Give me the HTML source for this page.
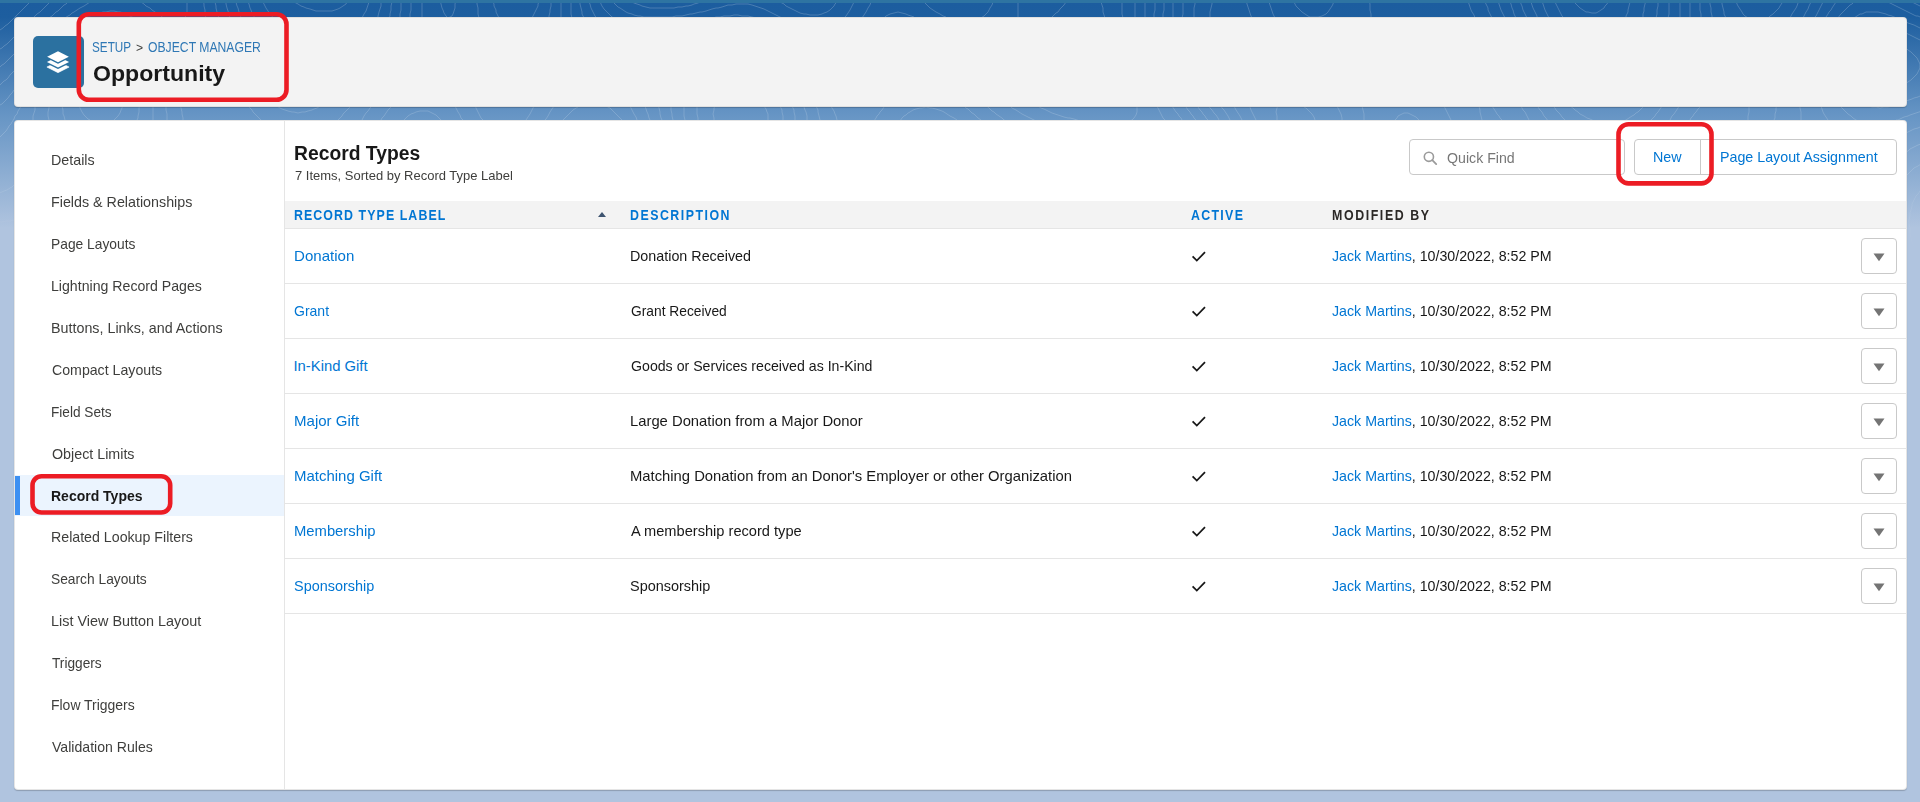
<!DOCTYPE html>
<html><head><meta charset="utf-8"><title>Opportunity | Record Types</title>
<style>
*{margin:0;padding:0;box-sizing:border-box}
html,body{width:1920px;height:802px;overflow:hidden}
body{position:relative;font-family:"Liberation Sans",sans-serif;background:#b0c4df;}
.bg{position:absolute;left:0;top:0;width:1920px;height:300px;
 background:linear-gradient(to bottom,#2e74a2 0,#2e74a2 3px,#1c5d9f 3px,#1d5e9f 17px,#6594c4 113px,#b0c4df 228px,#b0c4df 300px);}
.abs{position:absolute}
.t{position:absolute;white-space:nowrap;font-family:"Liberation Sans",sans-serif}
.card{position:absolute;border-radius:4px;}
.hdr{left:14px;top:17px;width:1893px;height:90px;background:#f3f3f3;border:1px solid rgba(0,0,0,.08);box-shadow:0 1px 1px rgba(0,0,0,.2)}
.main{left:14px;top:120px;width:1893px;height:670px;background:#fff;border:1px solid rgba(0,0,0,.1);box-shadow:0 1px 1px rgba(0,0,0,.2)}
.icon{position:absolute;left:33px;top:36px;width:51px;height:52px;background:#2b71a0;border-radius:5px}
.icon svg{position:absolute;left:0;top:0}
.navsel{position:absolute;left:15px;top:475px;width:269px;height:41px;background:#ebf4fe}
.navbar{position:absolute;left:15px;top:476px;width:4.5px;height:39px;background:#3d90f2}
.vline{position:absolute;left:284px;top:120px;width:1px;height:670px;background:#e5e5e5}
.qfbox{position:absolute;left:1409px;top:139px;width:216px;height:36px;border:1px solid #c9c9c9;border-radius:4px;background:#fff}
.btng{position:absolute;left:1634px;top:139px;width:263px;height:36px;border:1px solid #c9c9c9;border-radius:4px;background:#fff}
.btndiv{position:absolute;left:1700px;top:139px;width:1px;height:36px;background:#c9c9c9}
.thead{position:absolute;left:285px;top:201px;width:1621px;height:28px;background:#f3f3f3;border-bottom:1px solid #e5e5e5}
.rowb{position:absolute;left:285px;width:1621px;height:1px;background:#e5e5e5}
.dd{position:absolute;left:1861px;width:36px;height:35.5px;border:1px solid #c9c9c9;border-radius:4px;background:#fff}
</style></head>
<body>
<div class="bg"></div>
<svg class="abs" style="left:0;top:0" width="1920" height="270"><defs><linearGradient id="tg" x1="0" y1="0" x2="0" y2="1"><stop offset="0" stop-color="#fff" stop-opacity="1"/><stop offset="0.55" stop-color="#fff" stop-opacity="0.8"/><stop offset="0.95" stop-color="#fff" stop-opacity="0"/></linearGradient><mask id="tm" maskUnits="userSpaceOnUse" x="0" y="0" width="1920" height="270"><rect x="0" y="3" width="1920" height="267" fill="url(#tg)"/></mask></defs><g mask="url(#tm)" fill="none" stroke="#ffffff" stroke-opacity="0.2" stroke-width="1"><path d="M627 -2 629 0 632 2 634 3 637 4 640 5 642 6 646 7 650 8 653 8 656 8 660 8 664 8 668 8 672 8 674 8 678 7 682 7 686 6 688 6 692 5 694 4 698 3 700 2 704 1 706 -0 710 -2 710 -2"/><path d="M775 -2 778 0 780 2 782 3 784 4 786 6 790 8 792 9 794 10 798 12 800 13 804 14 806 14 810 15 814 15 818 15 822 14 824 13 827 12 830 10 832 8 834 6 835 4 837 2 838 -1 839 -2"/><path d="M611 -2 612 0 614 3 616 5 618 7 620 8 623 10 626 12 628 13 632 14 634 15 638 16 640 16 644 17 648 17 652 17 656 17 660 17 664 17 668 17 672 17 676 16 679 16 682 16 686 15 690 14 692 14 696 13 700 12 702 12 706 11 709 10 712 9 716 8 718 8 722 7 725 6 728 5 732 5 736 4 738 4 742 4 744 4 748 4 752 5 755 6 758 7 761 8 764 9 766 10 770 12 772 13 774 14 778 16 780 17 782 18 782 18"/><path d="M844 18 846 16 848 13 850 10 851 8 852 6 854 2 855 0 855 -2"/><path d="M951 -2 954 -1 958 -0 962 -0 966 -2 967 -2"/><path d="M-2 4 0 3 2 1 4 -1 5 -2"/><path d="M599 -2 600 1 601 4 602 6 604 9 606 11 608 13 610 15 612 17 614 18"/><path d="M713 18 716 17 720 17 724 16 726 16 730 16 734 15 738 15 742 16 746 16 748 16 752 17 756 18 756 18"/><path d="M862 18 864 15 866 12 867 10 868 8 870 5 871 2 872 0 873 -2"/><path d="M920 -2 922 0 924 2 926 4 928 6 930 8 933 10 936 12 938 13 940 14 943 16 946 17 947 18"/><path d="M981 18 984 16 986 14 988 12 989 10 990 8 992 5 993 2 994 -1 994 -2"/><path d="M-2 31 0 30 3 28 5 26 8 24 10 22 12 20 14 18 16 16 18 14 20 12 22 10 24 8 26 6 28 4 30 2 31 0 33 -2 33 -2"/><path d="M589 -2 589 2 590 4 591 8 592 10 594 14 595 16 597 18 597 18"/><path d="M884 18 886 16 888 15 890 14 894 13 898 12 902 13 906 14 908 15 911 16 914 17 915 18"/><path d="M1018 18 1018 14 1018 10 1018 6 1018 2 1018 -2 1018 -2"/><path d="M1069 -2 1068 0 1066 2 1064 5 1062 7 1060 9 1058 12 1056 13 1054 15 1052 17 1051 18"/><path d="M1073 104 1076 105 1080 105 1084 106 1086 106 1090 106 1094 106 1097 106 1100 105 1104 104 1105 104"/><path d="M1105 18 1104 15 1103 12 1103 8 1102 5 1101 2 1101 -2 1101 -2"/><path d="M1572 -2 1573 0 1574 2 1576 4 1578 6 1580 8 1583 10 1586 12 1588 12 1592 13 1596 13 1598 12 1601 10 1604 8 1605 6 1607 4 1608 2 1610 -2 1610 -2"/><path d="M-2 51 0 49 2 48 4 46 7 44 9 42 11 40 13 38 14 37"/><path d="M33 18 35 16 37 14 40 12 42 10 44 8 46 6 48 4 50 2 51 0 53 -2 53 -2"/><path d="M579 -2 580 2 580 4 581 8 582 12 582 14 584 18 584 18"/><path d="M1034 104 1036 105 1038 106 1041 108 1044 109 1046 110 1050 112 1052 113 1055 114 1058 115 1061 116 1064 117 1068 118 1070 118 1074 119 1077 120 1080 121 1082 121"/><path d="M1130 121 1132 120 1134 118 1136 115 1137 112 1137 108 1137 104 1137 104"/><path d="M1123 18 1122 14 1122 10 1122 6 1122 2 1122 -2 1122 -2"/><path d="M1554 -2 1554 0 1556 4 1557 6 1558 8 1560 12 1561 14 1562 16 1564 18"/><path d="M1626 18 1626 16 1628 12 1628 10 1629 6 1630 2 1630 0 1631 -2"/><path d="M-2 68 0 67 2 65 4 64 6 62 8 60 10 58 12 56 14 54 14 54"/><path d="M49 18 52 16 54 14 56 12 58 11 60 9 62 7 64 5 66 4 68 2 70 0 72 -2 72 -2"/><path d="M570 -2 571 2 571 6 571 10 571 14 572 18 572 18"/><path d="M1007 104 1010 106 1012 108 1014 109 1016 110 1019 112 1022 114 1024 115 1026 116 1030 118 1032 119 1034 120 1036 121"/><path d="M1165 120 1163 118 1162 116 1160 112 1159 110 1158 108 1156 105 1155 104"/><path d="M1135 18 1135 14 1135 10 1135 6 1135 2 1135 -2 1135 -2"/><path d="M1541 -2 1542 1 1543 4 1544 7 1545 10 1546 12 1548 16 1549 18 1549 18"/><path d="M1643 18 1643 14 1644 11 1644 8 1645 4 1646 0 1646 -2"/><path d="M1906 83 1908 82 1911 80 1913 78 1915 76 1917 74 1918 72 1920 68 1920 66 1920 64 1918 60 1917 58 1915 56 1913 54 1911 52 1908 50 1906 48 1906 48"/><path d="M622 120 620 118 618 116 616 114 614 112 612 110 610 108 608 107 606 106 603 104 603 104"/><path d="M582 104 580 105 578 107 576 108 573 110 571 112 569 114 567 116 565 118 563 120 562 121"/><path d="M442 121 440 119 438 117 436 115 434 114 430 112 428 111 424 111 420 111 416 112 414 113 411 114 408 116 406 118 404 120 404 120"/><path d="M-2 86 0 85 2 83 4 81 6 80 8 78 10 75 12 73 14 71 15 70"/><path d="M65 18 68 16 70 15 72 13 74 12 77 10 80 8 82 7 84 6 87 4 90 2 92 1 94 0 98 -2 98 -2"/><path d="M134 -2 136 -1 138 0 141 2 144 4 146 6 148 7 150 8 152 10 155 12 158 14 160 15 162 17 164 18"/><path d="M185 18 186 15 187 12 187 8 187 4 187 0 187 -2"/><path d="M440 -2 440 0 441 4 442 8 443 10 444 13 446 16 448 18 448 18"/><path d="M448 18 452 16 453 14 454 11 455 8 455 4 456 0 456 -2 456 -2"/><path d="M562 -2 561 2 561 6 561 10 561 14 561 18 561 18"/><path d="M555 104 554 106 552 109 550 112 549 114 548 116 546 119 545 120"/><path d="M463 120 461 118 460 115 458 112 457 110 456 108 454 104 454 104"/><path d="M394 104 392 106 390 108 388 110 386 113 384 116 382 118 381 120 381 120"/><path d="M637 120 636 117 634 114 633 112 632 110 630 106 629 104 629 104"/><path d="M984 104 986 106 988 107 990 109 992 111 994 112 996 114 999 116 1002 118 1004 120 1006 121 1006 121"/><path d="M1182 120 1181 118 1179 116 1178 114 1176 112 1174 109 1172 106 1170 104 1170 104"/><path d="M1145 18 1145 14 1145 10 1145 6 1145 2 1146 -2 1146 -2"/><path d="M1530 -2 1531 2 1532 5 1533 8 1534 10 1536 14 1537 16 1537 18"/><path d="M1656 18 1657 14 1657 10 1658 6 1658 3 1658 0 1658 -2"/><path d="M1922 40 1920 40 1916 38 1914 37 1912 36 1908 34 1906 33 1906 33"/><path d="M1863 104 1866 105 1869 106 1872 107 1876 107 1880 108 1884 107 1888 107 1892 106 1894 105 1898 104 1899 104"/><path d="M1906 101 1909 100 1912 99 1914 98 1918 97 1920 96 1922 95"/><path d="M-2 107 0 105 2 104 4 102 6 100 8 98 10 95 12 93 14 90 14 90"/><path d="M84 18 88 16 90 16 94 14 96 14 100 13 103 12 106 12 110 11 114 11 118 12 120 12 124 13 126 14 130 16 132 17 134 18 134 18"/><path d="M206 18 205 14 205 10 204 6 204 4 203 0 203 -2"/><path d="M422 -2 422 2 422 6 422 9 422 12 422 16 422 18"/><path d="M373 104 372 106 370 108 368 111 366 113 364 116 363 118 362 120 362 120"/><path d="M552 -2 551 2 551 6 550 10 550 12 549 16 549 18"/><path d="M535 104 534 106 532 110 531 112 530 114 528 117 526 120 526 120"/><path d="M483 120 481 118 480 116 478 112 477 110 476 108 475 104 475 104"/><path d="M479 18 478 14 478 11 478 8 477 4 477 0 477 -2"/><path d="M1196 120 1194 118 1193 116 1191 114 1190 112 1188 110 1186 107 1184 105 1183 104"/><path d="M1154 18 1154 14 1155 10 1155 6 1155 2 1155 -2 1155 -2"/><path d="M1519 -2 1520 0 1521 4 1522 6 1523 10 1524 12 1526 16 1527 18 1527 18"/><path d="M1596 104 1600 105 1604 105 1608 106 1612 105 1616 105 1618 104"/><path d="M1668 18 1669 14 1669 10 1669 6 1669 2 1670 -2 1670 -2"/><path d="M1922 28 1920 28 1916 26 1914 25 1911 24 1908 23 1906 22 1906 22"/><path d="M1897 18 1894 17 1892 16 1888 15 1886 14 1882 13 1878 12 1876 12 1872 12 1869 12 1866 12 1862 14 1860 14 1857 16 1854 18 1853 18"/><path d="M1839 104 1840 106 1842 108 1844 110 1846 112 1848 114 1851 116 1853 118 1856 120 1858 121 1858 121"/><path d="M1896 120 1898 120 1902 118 1904 117 1908 116 1910 115 1913 114 1916 113 1919 112 1922 111 1922 111"/><path d="M650 120 649 118 648 114 647 112 646 109 645 106 645 104"/><path d="M830 104 831 106 832 108 834 111 835 114 836 116 837 120 837 120"/><path d="M874 121 876 118 877 116 879 114 880 112 882 110 884 107 886 105 887 104"/><path d="M961 104 964 106 966 108 968 109 970 111 972 113 974 114 976 116 978 118 981 120 982 121"/><path d="M411 -2 411 2 411 6 411 10 410 14 410 18 410 18"/><path d="M353 104 351 106 349 108 347 110 345 112 343 114 342 116 340 118 338 120 338 120"/><path d="M261 120 259 118 257 116 255 114 253 112 252 110 250 108 248 105 247 104"/><path d="M219 18 218 15 217 12 216 8 216 6 215 2 215 -2 215 -2"/><path d="M540 -2 540 0 538 4 538 6 536 10 535 12 534 14 532 18 532 18"/><path d="M499 18 498 16 496 12 496 10 494 6 494 4 492 0 492 -2 492 -2"/><path d="M1208 120 1206 118 1205 116 1203 114 1202 112 1200 110 1198 107 1196 105 1195 104"/><path d="M1163 18 1163 14 1164 10 1164 6 1164 4 1164 0 1164 -2"/><path d="M1509 -2 1510 2 1511 4 1512 8 1513 10 1514 14 1515 16 1516 18"/><path d="M1568 104 1570 106 1573 108 1575 110 1578 112 1580 114 1582 115 1584 116 1587 118 1590 119 1592 120 1594 121"/><path d="M1624 121 1626 120 1629 118 1632 116 1634 115 1636 113 1638 112 1640 110 1642 108 1644 106 1646 104 1646 104"/><path d="M1680 18 1680 14 1680 10 1680 6 1680 3 1680 0 1680 -2"/><path d="M1922 18 1918 16 1916 16 1912 14 1910 13 1908 12 1904 10 1902 9 1900 8 1896 6 1894 5 1892 4 1888 2 1886 1 1883 0 1880 -1 1878 -2 1878 -2"/><path d="M1862 -2 1860 -1 1858 0 1854 2 1852 4 1850 5 1848 7 1846 9 1844 11 1842 13 1840 15 1838 18 1838 18"/><path d="M1820 104 1821 106 1822 109 1823 112 1824 114 1826 117 1828 120 1828 121"/><path d="M1906 133 1908 132 1912 130 1914 129 1918 128 1920 127 1922 127"/><path d="M-2 139 0 137 2 135 4 133 6 131 8 128 9 126 11 124 12 122 14 119 15 116 17 114 18 111 20 108 21 106 22 104"/><path d="M180 104 181 108 182 112 182 114 183 118 183 120"/><path d="M662 120 661 118 660 114 660 112 659 108 658 104 658 104"/><path d="M815 104 816 106 818 110 818 112 819 116 820 120 820 120"/><path d="M900 121 902 118 904 116 906 115 908 113 910 112 913 110 916 109 920 108 922 108 926 107 930 108 932 108 936 109 939 110 942 111 944 112 947 114 950 116 952 117 954 118 957 120 958 121"/><path d="M401 -2 401 2 401 6 401 10 400 14 400 16 400 18"/><path d="M324 104 322 105 320 106 317 108 314 109 312 110 308 111 305 112 302 112 298 113 294 112 292 112 288 111 285 110 282 109 280 108 277 106 274 104 274 104"/><path d="M230 18 229 14 228 11 227 8 226 4 226 2 225 -2 225 -2"/><path d="M1219 120 1218 118 1216 115 1214 113 1212 110 1210 108 1209 106 1207 104 1207 104"/><path d="M1173 18 1173 14 1173 10 1173 6 1173 2 1174 -2 1174 -2"/><path d="M1497 -2 1498 0 1499 4 1500 7 1501 10 1502 12 1504 16 1505 18 1505 18"/><path d="M1551 104 1553 106 1555 108 1556 110 1558 112 1560 114 1562 117 1564 119 1566 121 1566 121"/><path d="M1651 120 1653 118 1655 116 1656 114 1658 112 1660 109 1662 106 1664 104 1664 104"/><path d="M1690 18 1690 14 1690 10 1690 6 1690 2 1690 -2 1690 -2"/><path d="M1839 -2 1837 0 1836 2 1834 5 1832 8 1831 10 1829 12 1828 14 1826 17 1826 18"/><path d="M1800 104 1800 108 1801 112 1801 116 1801 120 1801 120"/><path d="M1922 7 1920 6 1916 4 1914 3 1912 2 1909 0 1906 -2 1906 -2"/><path d="M-2 193 2 192 4 191 7 190 10 188 12 187 14 185 14 185"/><path d="M33 120 33 116 34 113 35 110 35 106 36 104"/><path d="M166 104 166 108 166 110 167 114 167 118 167 120"/><path d="M673 120 672 116 672 114 671 110 671 106 671 104"/><path d="M803 104 804 107 805 110 806 112 807 116 807 120 807 120"/><path d="M1906 152 1908 151 1910 149 1912 148 1916 146 1918 145 1921 144 1922 144"/><path d="M392 -2 392 2 391 6 391 10 390 14 390 16 389 18"/><path d="M241 18 240 14 239 12 238 8 237 6 236 2 236 0 235 -2"/><path d="M1420 121 1418 119 1416 117 1414 116 1410 114 1408 113 1404 113 1402 114 1398 116 1397 118 1395 120 1395 120"/><path d="M1230 120 1229 118 1228 116 1226 113 1224 110 1222 108 1221 106 1219 104 1219 104"/><path d="M1182 18 1183 14 1183 10 1183 6 1183 2 1184 -2 1184 -2"/><path d="M1292 -2 1294 2 1295 4 1296 6 1298 8 1300 10 1302 12 1305 14 1308 16 1310 17 1314 17 1318 17 1322 16 1324 15 1326 14 1328 12 1330 9 1332 6 1333 4 1334 0 1335 -2 1335 -2"/><path d="M1484 -2 1485 2 1486 4 1488 8 1488 10 1490 14 1491 16 1492 18"/><path d="M1536 104 1538 107 1540 110 1542 112 1543 114 1544 116 1546 118 1548 121 1548 121"/><path d="M1670 120 1671 118 1672 116 1674 114 1676 111 1678 108 1679 106 1681 104 1681 104"/><path d="M1701 18 1701 14 1700 10 1700 6 1700 2 1700 0 1700 -2"/><path d="M1825 -2 1824 0 1822 4 1821 6 1820 8 1818 12 1817 14 1816 16 1814 18"/><path d="M1777 104 1776 108 1776 111 1775 114 1775 118 1774 120"/><path d="M-2 222 2 222 6 221 10 221 14 220 14 220"/><path d="M49 120 48 116 48 112 49 108 49 104 49 104"/><path d="M153 104 153 108 153 112 153 116 153 120 153 120"/><path d="M685 120 684 116 684 114 684 110 684 106 684 104"/><path d="M791 104 792 106 794 110 794 112 795 116 795 120 795 120"/><path d="M1906 176 1908 174 1910 172 1912 170 1914 168 1916 167 1918 166 1921 164 1922 163"/><path d="M382 -2 381 2 381 6 380 9 379 12 378 16 378 18 378 18"/><path d="M254 18 254 16 252 13 251 10 250 8 249 4 248 2 247 -2 247 -2"/><path d="M1268 -2 1269 2 1270 5 1271 8 1272 11 1273 14 1274 16 1275 18"/><path d="M1362 104 1362 106 1363 110 1364 114 1364 118 1364 120 1364 120"/><path d="M1242 120 1241 118 1240 116 1238 113 1236 110 1235 108 1234 106 1232 104"/><path d="M1194 18 1194 14 1194 12 1194 8 1195 4 1195 0 1195 -2"/><path d="M1451 120 1450 118 1448 114 1447 112 1446 110 1444 106 1443 104 1443 104"/><path d="M1371 18 1371 14 1370 10 1370 8 1370 4 1369 0 1369 -2"/><path d="M1467 -2 1468 1 1469 4 1470 7 1471 10 1472 12 1474 15 1475 18 1475 18"/><path d="M1520 104 1522 108 1523 110 1525 112 1526 114 1528 118 1529 120 1530 121"/><path d="M1813 -2 1812 0 1810 4 1809 6 1808 9 1806 12 1805 14 1804 16 1803 18"/><path d="M1749 104 1749 108 1749 112 1748 116 1748 120 1748 120"/><path d="M1690 120 1691 118 1693 116 1694 114 1696 112 1698 109 1700 107 1702 104 1702 104"/><path d="M1712 18 1712 16 1711 12 1711 8 1710 4 1710 0 1710 -2 1710 -2"/><path d="M65 120 64 116 63 114 63 110 62 106 62 104"/><path d="M140 104 139 108 139 112 138 116 138 118 137 120"/><path d="M698 120 698 118 697 114 697 110 697 106 698 104"/><path d="M779 104 780 106 782 110 782 112 783 116 783 120 783 120"/><path d="M-2 245 2 245 6 245 10 246 12 246 14 246"/><path d="M1920 270 1919 266 1918 264 1917 260 1916 257 1915 254 1914 250 1914 248 1913 244 1912 242 1911 238 1910 234 1910 232 1910 228 1909 224 1909 220 1910 216 1910 213 1911 210 1912 206 1912 204 1914 200 1915 198 1916 196 1918 194 1920 191 1922 189 1922 189"/><path d="M370 -2 369 2 368 5 367 8 366 11 364 14 363 16 362 18"/><path d="M273 18 272 16 270 14 268 11 266 8 265 6 264 4 262 0 262 -2 262 -2"/><path d="M1245 -2 1246 0 1247 4 1248 7 1249 10 1250 13 1251 16 1252 18 1252 18"/><path d="M1336 104 1337 106 1338 108 1340 112 1341 114 1342 118 1342 120 1342 120"/><path d="M1256 120 1255 118 1254 116 1252 112 1251 110 1250 107 1248 104 1248 104"/><path d="M1210 18 1210 15 1210 12 1211 8 1212 4 1212 2 1213 -2 1213 -2"/><path d="M1800 -2 1799 0 1798 3 1797 6 1796 8 1794 11 1792 14 1791 16 1790 18 1790 18"/><path d="M1726 18 1724 14 1724 12 1723 8 1722 4 1722 2 1721 -2 1721 -2"/><path d="M1482 120 1481 116 1480 112 1480 110 1479 106 1478 104"/><path d="M1491 104 1492 106 1494 109 1496 112 1497 114 1499 116 1500 118 1502 120 1502 120"/><path d="M90 120 88 119 86 117 84 115 82 112 81 110 80 108 79 104 79 104"/><path d="M123 104 122 108 121 110 120 113 118 116 116 118 114 120 114 120"/><path d="M714 120 714 118 713 114 714 110 714 108 716 104 716 104"/><path d="M762 104 764 106 766 109 767 112 768 114 768 118 768 120 768 120"/><path d="M350 -2 349 0 347 2 346 4 343 6 340 8 338 9 335 10 332 11 328 11 324 11 320 11 316 11 313 10 310 9 306 8 304 7 301 6 298 4 296 3 294 2 292 0 289 -2 289 -2"/><path d="M1785 -2 1784 0 1782 3 1780 6 1779 8 1777 10 1775 12 1773 14 1770 16 1768 18 1767 18"/><path d="M1748 18 1745 16 1743 14 1742 12 1740 9 1738 6 1737 4 1736 1 1735 -2 1735 -2"/><path d="M1277 120 1277 116 1276 112 1277 108 1278 104 1278 104"/><path d="M1299 104 1302 105 1304 107 1306 108 1308 110 1310 112 1312 114 1314 117 1315 120 1315 120"/></g></svg>
<div class="card hdr"></div>
<div class="icon"><svg width="51" height="52" viewBox="0 0 51 52">
<path d="M25 25.45 L36.1 31.05 L25 36.65 L13.9 31.05 Z" fill="#fff" stroke="#fff" stroke-width="0.6" stroke-linejoin="round"/>
<path d="M25 20.40 L36.1 26.00 L25 31.60 L13.9 26.00 Z" fill="#fff" stroke="#2b71a0" stroke-width="2.6" stroke-linejoin="round"/>
<path d="M25 20.40 L36.1 26.00 L25 31.60 L13.9 26.00 Z" fill="#fff"/>
<path d="M25 15.15 L35.85 20.75 L25 26.35 L14.15 20.75 Z" fill="#fff" stroke="#2b71a0" stroke-width="2.6" stroke-linejoin="round"/>
<path d="M25 15.15 L35.85 20.75 L25 26.35 L14.15 20.75 Z" fill="#fff"/>
</svg></div>
<div class="card main"></div>
<div class="navsel"></div><div class="navbar"></div>
<div class="vline"></div>
<div class="qfbox"></div>
<svg class="abs" style="left:1420px;top:148px" width="22" height="22" viewBox="0 0 22 22">
<circle cx="8.9" cy="8.8" r="4.6" fill="none" stroke="#9b9b9b" stroke-width="1.6"/>
<path d="M12.3 12.2 L16.2 16.1" stroke="#9b9b9b" stroke-width="1.8" stroke-linecap="round"/></svg>
<div class="btng"></div><div class="btndiv"></div>
<div class="thead"></div>
<svg class="abs" style="left:597px;top:211px" width="10" height="7" viewBox="0 0 10 7"><path d="M1 6 L5 1 L9 6 Z" fill="#3e5470"/></svg>
<div class="rowb" style="top:283px"></div>
<svg class="abs" style="left:1190px;top:250px" width="17" height="13" viewBox="0 0 17 13"><path d="M2.6 6.3 L6.8 10.6 L15 2.2" fill="none" stroke="#181818" stroke-width="1.75"/></svg>
<div class="dd" style="top:238.3px"><svg width="12" height="9" viewBox="0 0 12 9" style="position:absolute;left:10.5px;top:13.8px"><path d="M0.5 0.5 L11.5 0.5 L6 8.3 Z" fill="#747474"/></svg></div>
<div class="rowb" style="top:338px"></div>
<svg class="abs" style="left:1190px;top:305px" width="17" height="13" viewBox="0 0 17 13"><path d="M2.6 6.3 L6.8 10.6 L15 2.2" fill="none" stroke="#181818" stroke-width="1.75"/></svg>
<div class="dd" style="top:293.3px"><svg width="12" height="9" viewBox="0 0 12 9" style="position:absolute;left:10.5px;top:13.8px"><path d="M0.5 0.5 L11.5 0.5 L6 8.3 Z" fill="#747474"/></svg></div>
<div class="rowb" style="top:393px"></div>
<svg class="abs" style="left:1190px;top:360px" width="17" height="13" viewBox="0 0 17 13"><path d="M2.6 6.3 L6.8 10.6 L15 2.2" fill="none" stroke="#181818" stroke-width="1.75"/></svg>
<div class="dd" style="top:348.3px"><svg width="12" height="9" viewBox="0 0 12 9" style="position:absolute;left:10.5px;top:13.8px"><path d="M0.5 0.5 L11.5 0.5 L6 8.3 Z" fill="#747474"/></svg></div>
<div class="rowb" style="top:448px"></div>
<svg class="abs" style="left:1190px;top:415px" width="17" height="13" viewBox="0 0 17 13"><path d="M2.6 6.3 L6.8 10.6 L15 2.2" fill="none" stroke="#181818" stroke-width="1.75"/></svg>
<div class="dd" style="top:403.3px"><svg width="12" height="9" viewBox="0 0 12 9" style="position:absolute;left:10.5px;top:13.8px"><path d="M0.5 0.5 L11.5 0.5 L6 8.3 Z" fill="#747474"/></svg></div>
<div class="rowb" style="top:503px"></div>
<svg class="abs" style="left:1190px;top:470px" width="17" height="13" viewBox="0 0 17 13"><path d="M2.6 6.3 L6.8 10.6 L15 2.2" fill="none" stroke="#181818" stroke-width="1.75"/></svg>
<div class="dd" style="top:458.3px"><svg width="12" height="9" viewBox="0 0 12 9" style="position:absolute;left:10.5px;top:13.8px"><path d="M0.5 0.5 L11.5 0.5 L6 8.3 Z" fill="#747474"/></svg></div>
<div class="rowb" style="top:558px"></div>
<svg class="abs" style="left:1190px;top:525px" width="17" height="13" viewBox="0 0 17 13"><path d="M2.6 6.3 L6.8 10.6 L15 2.2" fill="none" stroke="#181818" stroke-width="1.75"/></svg>
<div class="dd" style="top:513.3px"><svg width="12" height="9" viewBox="0 0 12 9" style="position:absolute;left:10.5px;top:13.8px"><path d="M0.5 0.5 L11.5 0.5 L6 8.3 Z" fill="#747474"/></svg></div>
<div class="rowb" style="top:613px"></div>
<svg class="abs" style="left:1190px;top:580px" width="17" height="13" viewBox="0 0 17 13"><path d="M2.6 6.3 L6.8 10.6 L15 2.2" fill="none" stroke="#181818" stroke-width="1.75"/></svg>
<div class="dd" style="top:568.3px"><svg width="12" height="9" viewBox="0 0 12 9" style="position:absolute;left:10.5px;top:13.8px"><path d="M0.5 0.5 L11.5 0.5 L6 8.3 Z" fill="#747474"/></svg></div>
<div class="t" id="bc1" style="left:92.25px;top:34px;font-size:14.2px;line-height:26px;color:#2f78b5;transform:scaleX(0.8261);transform-origin:0 0;">SETUP</div>
<div class="t" id="bc2" style="left:135.9px;top:35px;font-size:13.5px;line-height:25px;color:#3e3e3c;transform:scaleX(0.9007);transform-origin:0 0;">&gt;</div>
<div class="t" id="bc3" style="left:148.1px;top:34px;font-size:14.2px;line-height:26px;color:#2f78b5;transform:scaleX(0.8589);transform-origin:0 0;">OBJECT MANAGER</div>
<div class="t" id="opp" style="left:93.0px;top:56px;font-size:22.4px;line-height:35px;color:#181818;font-weight:bold;transform:scaleX(1.0312);transform-origin:0 0;">Opportunity</div>
<div class="t" id="nav0" style="left:50.7px;top:147px;font-size:14.8px;line-height:26px;color:#3e3e3c;transform:scaleX(0.9656);transform-origin:0 0;">Details</div>
<div class="t" id="nav1" style="left:50.7px;top:189px;font-size:14.8px;line-height:26px;color:#3e3e3c;transform:scaleX(0.9656);transform-origin:0 0;">Fields &amp; Relationships</div>
<div class="t" id="nav2" style="left:50.7px;top:231px;font-size:14.8px;line-height:26px;color:#3e3e3c;transform:scaleX(0.933);transform-origin:0 0;">Page Layouts</div>
<div class="t" id="nav3" style="left:50.7px;top:273px;font-size:14.8px;line-height:26px;color:#3e3e3c;transform:scaleX(0.9555);transform-origin:0 0;">Lightning Record Pages</div>
<div class="t" id="nav4" style="left:50.7px;top:315px;font-size:14.8px;line-height:26px;color:#3e3e3c;transform:scaleX(0.9662);transform-origin:0 0;">Buttons, Links, and Actions</div>
<div class="t" id="nav5" style="left:51.7px;top:357px;font-size:14.8px;line-height:26px;color:#3e3e3c;transform:scaleX(0.9565);transform-origin:0 0;">Compact Layouts</div>
<div class="t" id="nav6" style="left:50.7px;top:399px;font-size:14.8px;line-height:26px;color:#3e3e3c;transform:scaleX(0.9222);transform-origin:0 0;">Field Sets</div>
<div class="t" id="nav7" style="left:51.7px;top:441px;font-size:14.8px;line-height:26px;color:#3e3e3c;transform:scaleX(0.9648);transform-origin:0 0;">Object Limits</div>
<div class="t" id="nav8" style="left:50.7px;top:483px;font-size:14.3px;line-height:26px;color:#181818;font-weight:bold;transform:scaleX(0.9786);transform-origin:0 0;">Record Types</div>
<div class="t" id="nav9" style="left:50.7px;top:524px;font-size:14.8px;line-height:26px;color:#3e3e3c;transform:scaleX(0.9589);transform-origin:0 0;">Related Lookup Filters</div>
<div class="t" id="nav10" style="left:50.7px;top:566px;font-size:14.8px;line-height:26px;color:#3e3e3c;transform:scaleX(0.9312);transform-origin:0 0;">Search Layouts</div>
<div class="t" id="nav11" style="left:50.7px;top:608px;font-size:14.8px;line-height:26px;color:#3e3e3c;transform:scaleX(0.9739);transform-origin:0 0;">List View Button Layout</div>
<div class="t" id="nav12" style="left:51.7px;top:650px;font-size:14.8px;line-height:26px;color:#3e3e3c;transform:scaleX(0.9244);transform-origin:0 0;">Triggers</div>
<div class="t" id="nav13" style="left:50.7px;top:692px;font-size:14.8px;line-height:26px;color:#3e3e3c;transform:scaleX(0.9429);transform-origin:0 0;">Flow Triggers</div>
<div class="t" id="nav14" style="left:51.7px;top:734px;font-size:14.8px;line-height:26px;color:#3e3e3c;transform:scaleX(0.9524);transform-origin:0 0;">Validation Rules</div>
<div class="t" id="title" style="left:294.0px;top:137px;font-size:19.6px;line-height:32px;color:#181818;font-weight:bold;transform:scaleX(0.9847);transform-origin:0 0;">Record Types</div>
<div class="t" id="sub" style="left:294.6px;top:163px;font-size:13.6px;line-height:25px;color:#3e3e3c;transform:scaleX(0.9558);transform-origin:0 0;">7 Items, Sorted by Record Type Label</div>
<div class="t" id="qf" style="left:1447.0px;top:145px;font-size:14.8px;line-height:26px;color:#767676;transform:scaleX(0.9574);transform-origin:0 0;">Quick Find</div>
<div class="t" id="new" style="left:1653.4px;top:144px;font-size:14.8px;line-height:26px;color:#0176d3;transform:scaleX(0.9661);transform-origin:0 0;">New</div>
<div class="t" id="pla" style="left:1719.5px;top:144px;font-size:14.8px;line-height:26px;color:#0176d3;transform:scaleX(0.9629);transform-origin:0 0;">Page Layout Assignment</div>
<div class="t" id="h1" style="left:293.5px;top:202px;font-size:14.4px;line-height:26px;color:#0176d3;font-weight:bold;letter-spacing:1.25px;transform:scaleX(0.86);transform-origin:0 0;">RECORD TYPE LABEL</div>
<div class="t" id="h2" style="left:630.0px;top:202px;font-size:14.4px;line-height:26px;color:#0176d3;font-weight:bold;letter-spacing:1.74px;transform:scaleX(0.86);transform-origin:0 0;">DESCRIPTION</div>
<div class="t" id="h3" style="left:1191.0px;top:202px;font-size:14.4px;line-height:26px;color:#0176d3;font-weight:bold;letter-spacing:1.52px;transform:scaleX(0.86);transform-origin:0 0;">ACTIVE</div>
<div class="t" id="h4" style="left:1331.5px;top:202px;font-size:14.4px;line-height:26px;color:#2b2826;font-weight:bold;letter-spacing:1.86px;transform:scaleX(0.86);transform-origin:0 0;">MODIFIED BY</div>
<div class="t" id="lab0" style="left:293.5px;top:243px;font-size:14.8px;line-height:26px;color:#0176d3;transform:scaleX(1.0179);transform-origin:0 0;">Donation</div>
<div class="t" id="desc0" style="left:629.8px;top:243px;font-size:14.8px;line-height:26px;color:#181818;transform:scaleX(0.9679);transform-origin:0 0;">Donation Received</div>
<div class="t" id="mod0" style="left:1332.2px;top:243px;font-size:14.8px;line-height:26px;color:#181818;transform:scaleX(0.9605);transform-origin:0 0;"><span style="color:#0176d3">Jack Martins</span>, 10/30/2022, 8:52 PM</div>
<div class="t" id="lab1" style="left:293.5px;top:298px;font-size:14.8px;line-height:26px;color:#0176d3;transform:scaleX(0.9469);transform-origin:0 0;">Grant</div>
<div class="t" id="desc1" style="left:630.8px;top:298px;font-size:14.8px;line-height:26px;color:#181818;transform:scaleX(0.9314);transform-origin:0 0;">Grant Received</div>
<div class="t" id="mod1" style="left:1332.2px;top:298px;font-size:14.8px;line-height:26px;color:#181818;transform:scaleX(0.9605);transform-origin:0 0;"><span style="color:#0176d3">Jack Martins</span>, 10/30/2022, 8:52 PM</div>
<div class="t" id="lab2" style="left:293.5px;top:353px;font-size:14.8px;line-height:26px;color:#0176d3;">In-Kind Gift</div>
<div class="t" id="desc2" style="left:630.8px;top:353px;font-size:14.8px;line-height:26px;color:#181818;transform:scaleX(0.9564);transform-origin:0 0;">Goods or Services received as In-Kind</div>
<div class="t" id="mod2" style="left:1332.2px;top:353px;font-size:14.8px;line-height:26px;color:#181818;transform:scaleX(0.9605);transform-origin:0 0;"><span style="color:#0176d3">Jack Martins</span>, 10/30/2022, 8:52 PM</div>
<div class="t" id="lab3" style="left:293.5px;top:408px;font-size:14.8px;line-height:26px;color:#0176d3;transform:scaleX(1.0159);transform-origin:0 0;">Major Gift</div>
<div class="t" id="desc3" style="left:629.8px;top:408px;font-size:14.8px;line-height:26px;color:#181818;transform:scaleX(0.9999);transform-origin:0 0;">Large Donation from a Major Donor</div>
<div class="t" id="mod3" style="left:1332.2px;top:408px;font-size:14.8px;line-height:26px;color:#181818;transform:scaleX(0.9605);transform-origin:0 0;"><span style="color:#0176d3">Jack Martins</span>, 10/30/2022, 8:52 PM</div>
<div class="t" id="lab4" style="left:293.5px;top:463px;font-size:14.8px;line-height:26px;color:#0176d3;transform:scaleX(1.0118);transform-origin:0 0;">Matching Gift</div>
<div class="t" id="desc4" style="left:629.8px;top:463px;font-size:14.8px;line-height:26px;color:#181818;transform:scaleX(0.9998);transform-origin:0 0;">Matching Donation from an Donor&#39;s Employer or other Organization</div>
<div class="t" id="mod4" style="left:1332.2px;top:463px;font-size:14.8px;line-height:26px;color:#181818;transform:scaleX(0.9605);transform-origin:0 0;"><span style="color:#0176d3">Jack Martins</span>, 10/30/2022, 8:52 PM</div>
<div class="t" id="lab5" style="left:293.5px;top:518px;font-size:14.8px;line-height:26px;color:#0176d3;transform:scaleX(1.0001);transform-origin:0 0;">Membership</div>
<div class="t" id="desc5" style="left:630.8px;top:518px;font-size:14.8px;line-height:26px;color:#181818;transform:scaleX(0.9882);transform-origin:0 0;">A membership record type</div>
<div class="t" id="mod5" style="left:1332.2px;top:518px;font-size:14.8px;line-height:26px;color:#181818;transform:scaleX(0.9605);transform-origin:0 0;"><span style="color:#0176d3">Jack Martins</span>, 10/30/2022, 8:52 PM</div>
<div class="t" id="lab6" style="left:293.5px;top:573px;font-size:14.8px;line-height:26px;color:#0176d3;transform:scaleX(0.976);transform-origin:0 0;">Sponsorship</div>
<div class="t" id="desc6" style="left:629.8px;top:573px;font-size:14.8px;line-height:26px;color:#181818;transform:scaleX(0.9761);transform-origin:0 0;">Sponsorship</div>
<div class="t" id="mod6" style="left:1332.2px;top:573px;font-size:14.8px;line-height:26px;color:#181818;transform:scaleX(0.9605);transform-origin:0 0;"><span style="color:#0176d3">Jack Martins</span>, 10/30/2022, 8:52 PM</div>
<svg class="abs" style="left:0;top:0;z-index:10" width="1920" height="802">
<rect x="78.8" y="14.3" width="207.7" height="85.4" rx="10" ry="10" fill="none" stroke="#ec1c24" stroke-width="4.6"/>
<rect x="32.5" y="476.3" width="137.7" height="36.2" rx="9" ry="9" fill="none" stroke="#ec1c24" stroke-width="4.6"/>
<rect x="1618.5" y="124.3" width="93" height="59.1" rx="10" ry="10" fill="none" stroke="#ec1c24" stroke-width="4.6"/>
</svg>

</body></html>
